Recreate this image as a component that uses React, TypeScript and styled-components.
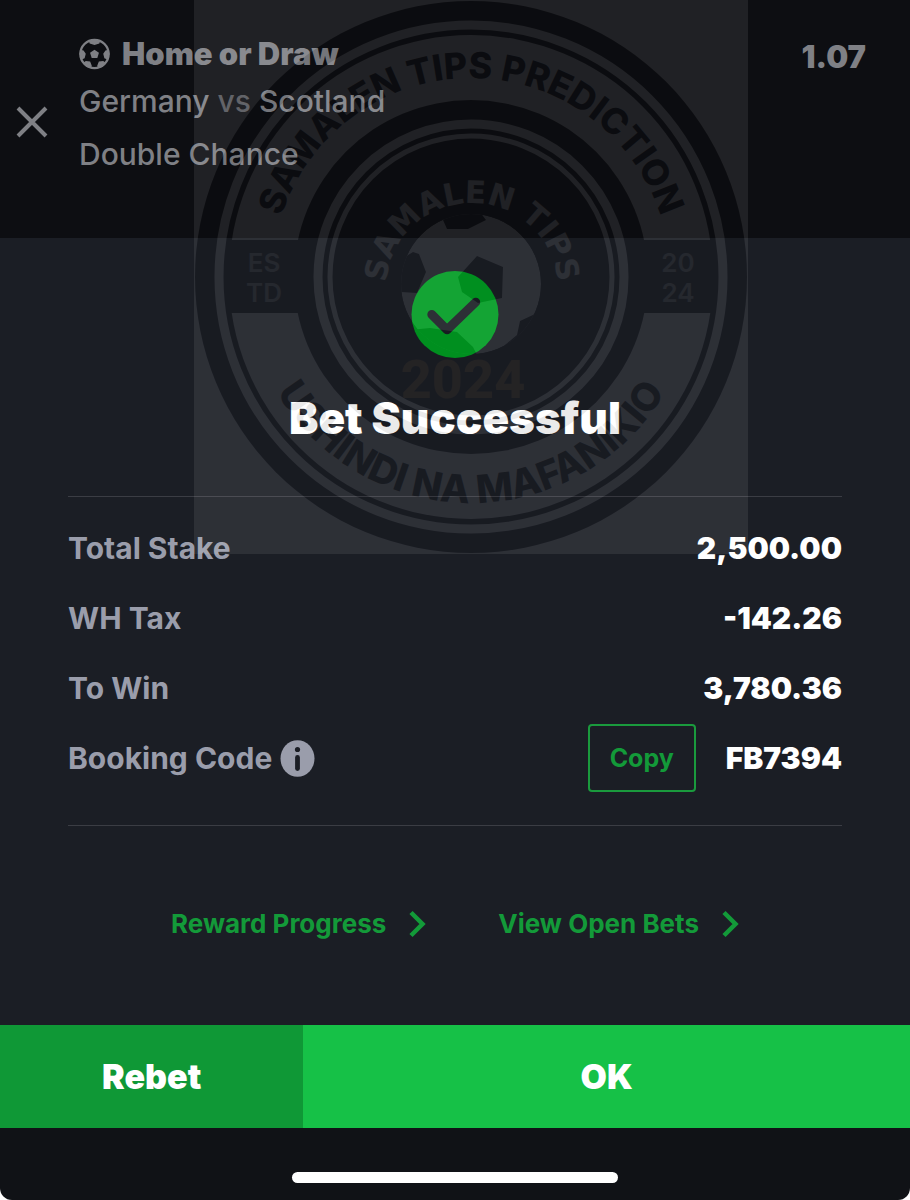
import React from "react";
import styled, { createGlobalStyle } from "styled-components";

const Global = createGlobalStyle`
  * { box-sizing: border-box; }
  html, body { margin: 0; background: #ffffff; }
  body { font-family: Inter, "Liberation Sans", sans-serif; color: #fff; }
  button { font: inherit; color: inherit; border: 0; padding: 0; background: none; cursor: pointer; }
`;

const Screen = styled.main`
  position: relative;
  display: flex;
  flex-direction: column;
  min-height: 100vh;
  background: #101216;
  border-radius: 0 0 12px 12px;
  overflow: hidden;
`;

const Selection = styled.header`
  display: flex;
  align-items: flex-start;
  height: 238px;
  padding: 34px 44px 0 16px;
  background: #0d0e12;
  color: #7f8085;
`;

const CloseButton = styled.button`
  width: 32px;
  height: 32px;
  margin: 72px 31px 0 0;
  svg { display: block; }
`;

const Pick = styled.div`
  flex: 1;
  font-size: 30px;
  font-weight: 500;
  line-height: 40px;
`;

const PickTitle = styled.h2`
  display: flex;
  align-items: center;
  gap: 12px;
  margin: 0;
  font-size: 31px;
  font-weight: 900;
  line-height: 40px;
`;

const Match = styled.p`
  margin: 7px 0 13px;
`;

const Versus = styled.span`
  color: #55565b;
`;

const Market = styled.p`
  margin: 0;
`;

const Odds = styled.span`
  font-size: 31px;
  font-weight: 900;
  line-height: 46px;
`;

const Sheet = styled.section`
  display: flex;
  flex: 1;
  flex-direction: column;
  padding: 33px 68px 0;
  background: #1b1e25;
`;

const Result = styled.div`
  display: flex;
  flex-direction: column;
  align-items: center;
`;

const ResultTitle = styled.h1`
  margin: 32px 0 50px;
  font-size: 44px;
  font-weight: 900;
  line-height: 56px;
`;

const Summary = styled.dl`
  margin: 0;
  padding: 16px 0 32px;
  border-top: 1px solid #3b3d44;
  border-bottom: 1px solid #3b3d44;
`;

const SummaryRow = styled.div`
  display: flex;
  align-items: center;
  justify-content: space-between;
  height: 70px;
`;

const Label = styled.dt`
  display: flex;
  align-items: center;
  gap: 8px;
  color: #9a9dab;
  font-size: 30px;
  font-weight: 700;
`;

const Value = styled.dd`
  display: flex;
  align-items: center;
  gap: 30px;
  margin: 0;
  font-size: 30px;
  font-weight: 900;
`;

const InfoButton = styled.button`
  svg { display: block; }
`;

const CopyButton = styled.button`
  width: 108px;
  height: 68px;
  border: 2px solid #1a9a3d;
  border-radius: 4px;
  color: #139a39;
  font-size: 25px;
  font-weight: 700;
`;

const Links = styled.nav`
  display: flex;
  justify-content: center;
  gap: 72px;
  padding: 78px 0 80px;
`;

const MoreLink = styled.a`
  display: flex;
  align-items: center;
  gap: 22px;
  color: #139a39;
  font-size: 26px;
  font-weight: 700;
  line-height: 40px;
  text-decoration: none;
`;

const Actions = styled.div`
  display: grid;
  grid-template-columns: 1fr 2fr;
`;

const Action = styled.button<{ $primary?: boolean }>`
  height: 103px;
  background: ${(p) => (p.$primary ? "#16c147" : "#0f9836")};
  font-size: 34px;
  font-weight: 900;
`;

const HomeArea = styled.footer`
  display: flex;
  justify-content: center;
  padding: 44px 0 17px;
`;

const HomeIndicator = styled.div`
  width: 326px;
  height: 11px;
  border-radius: 6px;
  background: #fff;
`;

const Watermark = styled.svg`
  position: absolute;
  top: 0;
  left: calc(50% + 16px);
  width: 554px;
  height: 554px;
  transform: translateX(-50%);
  opacity: 0.08;
  pointer-events: none;
  font-family: Inter, "Liberation Sans", sans-serif;
`;

const BallIcon = () => (
  <svg width="31" height="32" viewBox="0 0 32 32" aria-hidden="true">
    <circle cx="16" cy="16" r="14.6" fill="none" stroke="currentColor" strokeWidth="2.4" />
    <path fill="currentColor" d="M16 11.500l4.600 3.300-1.700 5.200h-5.800l-1.700-5.200z" />
    <path fill="currentColor" d="M10 2l1 3.200 5 1.600 5-1.600L22 2l-6-1.500zM30.500 11.500l-3.200.8-2.300 3.400 1.200 4.800 3 1.200L31.500 16zM1.500 11.500l3.200.8L7 15.700l-1.200 4.800-3 1.200L.5 16zM4.500 25l2.500-1.800 4.500.6 1.700 4.200-.7 2.600L8 29.500zM27.500 25L25 23.200l-4.500.6-1.700 4.200.7 2.600 4.500-1.100z" />
  </svg>
);

const Chevron = () => (
  <svg width="18" height="28" viewBox="0 0 18 28" aria-hidden="true">
    <path d="M3 2.500L14.500 14 3 25.500" fill="none" stroke="currentColor" strokeWidth="4.500" />
  </svg>
);

const Badge = () => (
  <Watermark viewBox="194 0 554 554" aria-hidden="true">
    <defs>
      <path id="arc-top" d="M272 320V277a199 199 0 0 1 398 0V320" />
      <path id="arc-bottom" d="M245 230V277a226 226 0 0 0 452 0V230" />
      <path id="arc-inner" d="M386 320V289a86 86 0 0 1 172 0V320" />
      <clipPath id="ball"><circle cx="471" cy="284" r="70" /></clipPath>
    </defs>
    <rect x="194" y="0" width="554" height="554" fill="#fff" />
    <circle cx="471" cy="277" r="276" />
    <circle cx="471" cy="277" r="252" fill="none" stroke="#fff" strokeWidth="9" />
    <circle cx="471" cy="277" r="242" fill="#fff" />
    <path d="M229 240H713V313H229z" />
    <circle cx="471" cy="277" r="177" />
    <circle cx="471" cy="277" r="153" fill="none" stroke="#fff" strokeWidth="9" />
    <circle cx="471" cy="277" r="141" fill="none" stroke="#fff" strokeWidth="5" />
    <g fontWeight="800" textAnchor="middle">
      <text fontSize="36"><textPath href="#arc-top" startOffset="50%">SAMALEN TIPS PREDICTION</textPath></text>
      <text fontSize="39"><textPath href="#arc-bottom" startOffset="50%">USHINDI NA MAFANIKIO</textPath></text>
    </g>
    <g fontSize="26" fontWeight="600" textAnchor="middle" fill="#999">
      <text x="264" y="272">ES</text>
      <text x="264" y="302">TD</text>
      <text x="678" y="272">20</text>
      <text x="678" y="302">24</text>
    </g>
    <text fontFamily='"DejaVu Sans", sans-serif' fontSize="31" fontWeight="700" textAnchor="middle" fill="#fff">
      <textPath href="#arc-inner" startOffset="50%">SAMALEN TIPS</textPath>
    </text>
    <g clipPath="url(#ball)">
      <circle cx="471" cy="284" r="70" fill="#fff" />
      <path d="M477 256l26 11-1 31-24 5-16-11-4-15zM443 220l7-8h30l6 8-18 9h-21zM400 260l13-8 6 2 7 18-9 21-17-1zM410 330l20-2 27 4 16 15 5 10h-50zM545 300l-10 14-15 7-3 14-12 10 20 12h20z" />
    </g>
    <text x="463" y="398" fontFamily="Roboto, sans-serif" fontSize="54" fontWeight="800" textAnchor="middle" fill="#8a5c20">2024</text>
  </Watermark>
);

export default function App() {
  return (
    <>
      <Global />
      <Screen>
        <Selection>
          <CloseButton aria-label="Close">
            <svg width="32" height="32" viewBox="0 0 32 32">
              <path d="M2 2l28 28M30 2L2 30" stroke="currentColor" strokeWidth="4" />
            </svg>
          </CloseButton>
          <Pick>
            <PickTitle><BallIcon />Home or Draw</PickTitle>
            <Match>Germany <Versus>vs</Versus> Scotland</Match>
            <Market>Double Chance</Market>
          </Pick>
          <Odds>1.07</Odds>
        </Selection>
        <Sheet>
          <Result>
            <svg width="88" height="87" viewBox="0 0 88 88" aria-hidden="true">
              <circle cx="44" cy="44" r="44" fill="#009c22" />
              <path d="M20.500 44L36 59.500 65 31.500" fill="none" stroke="#1b1e25" strokeWidth="9" strokeLinecap="round" strokeLinejoin="round" />
            </svg>
            <ResultTitle>Bet Successful</ResultTitle>
          </Result>
          <Summary>
            <SummaryRow><Label>Total Stake</Label><Value>2,500.00</Value></SummaryRow>
            <SummaryRow><Label>WH Tax</Label><Value>-142.26</Value></SummaryRow>
            <SummaryRow><Label>To Win</Label><Value>3,780.36</Value></SummaryRow>
            <SummaryRow>
              <Label>
                Booking Code
                <InfoButton aria-label="About booking codes">
                  <svg width="35" height="37" viewBox="0 0 35 37">
                    <ellipse cx="17.500" cy="18.500" rx="17" ry="18.300" fill="#9a9dab" />
                    <circle cx="17.500" cy="9.500" r="2.600" fill="#1b1e25" />
                    <path d="M17.500 17.500v11" stroke="#1b1e25" strokeWidth="4.800" strokeLinecap="round" />
                  </svg>
                </InfoButton>
              </Label>
              <Value><CopyButton>Copy</CopyButton>FB7394</Value>
            </SummaryRow>
          </Summary>
          <Links>
            <MoreLink href="#rewards">Reward Progress<Chevron /></MoreLink>
            <MoreLink href="#open-bets">View Open Bets<Chevron /></MoreLink>
          </Links>
        </Sheet>
        <Actions>
          <Action>Rebet</Action>
          <Action $primary>OK</Action>
        </Actions>
        <HomeArea><HomeIndicator /></HomeArea>
        <Badge />
      </Screen>
    </>
  );
}
